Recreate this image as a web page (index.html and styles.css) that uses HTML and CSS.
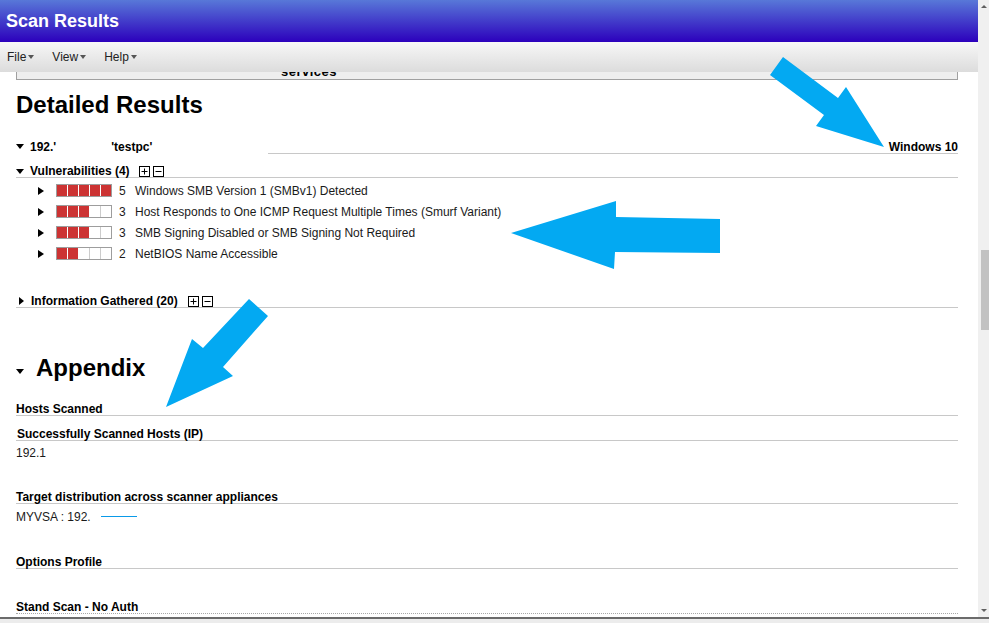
FILE: index.html
```html
<!DOCTYPE html>
<html>
<head>
<meta charset="utf-8">
<title>Scan Results</title>
<link rel="stylesheet" href="styles.css">
</head>
<body>

<div class="janela">
	<div class="principal">
		<div class="barraTitulo">Scan Results</div>

		<div class="menu">
			<span class="itemMenu">File</span>
			<span class="itemMenu">View</span>
			<span class="itemMenu">Help</span>
		</div>

		<div class="conteudo">
			<div class="caixaServicos">services</div>

			<h1 class="tituloGrande">Detailed Results</h1>

			<div class="linha host">
				<span class="setaBaixo"></span>
				<span>192.'</span>
				<span class="nomeHost">'testpc'</span>
				<span class="sistema">Windows 10</span>
			</div>

			<div class="linha vulnTopo">
				<span class="setaBaixo"></span>
				<span>Vulnerabilities (4)</span>
				<svg class="botaoMais" width="11" height="11" viewBox="0 0 11 11"><rect x="0.5" y="0.5" width="10" height="10" fill="#fff" stroke="#000"/><path d="M2.5 5.5h6M5.5 2.5v6" stroke="#000"/></svg>
				<svg class="botaoMenos" width="11" height="11" viewBox="0 0 11 11"><rect x="0.5" y="0.5" width="10" height="10" fill="#fff" stroke="#000"/><path d="M2.5 5.5h6" stroke="#000"/></svg>
			</div>

			<div class="listaVuln">
				<div class="vuln">
					<span class="setaDireita"></span>
					<span class="nivel"><i class="on"></i><i class="on"></i><i class="on"></i><i class="on"></i><i class="on"></i></span>
					<span class="numNivel">5</span>
					<span>Windows SMB Version 1 (SMBv1) Detected</span>
				</div>
				<div class="vuln">
					<span class="setaDireita"></span>
					<span class="nivel"><i class="on"></i><i class="on"></i><i class="on"></i><i></i><i></i></span>
					<span class="numNivel">3</span>
					<span>Host Responds to One ICMP Request Multiple Times (Smurf Variant)</span>
				</div>
				<div class="vuln">
					<span class="setaDireita"></span>
					<span class="nivel"><i class="on"></i><i class="on"></i><i class="on"></i><i></i><i></i></span>
					<span class="numNivel">3</span>
					<span>SMB Signing Disabled or SMB Signing Not Required</span>
				</div>
				<div class="vuln">
					<span class="setaDireita"></span>
					<span class="nivel"><i class="on"></i><i class="on"></i><i></i><i></i><i></i></span>
					<span class="numNivel">2</span>
					<span>NetBIOS Name Accessible</span>
				</div>
			</div>

			<div class="linha infoTopo">
				<span class="setaPequena"></span>
				<span>Information Gathered (20)</span>
				<svg class="botaoMais" width="11" height="11" viewBox="0 0 11 11"><rect x="0.5" y="0.5" width="10" height="10" fill="#fff" stroke="#000"/><path d="M2.5 5.5h6M5.5 2.5v6" stroke="#000"/></svg>
				<svg class="botaoMenos" width="11" height="11" viewBox="0 0 11 11"><rect x="0.5" y="0.5" width="10" height="10" fill="#fff" stroke="#000"/><path d="M2.5 5.5h6" stroke="#000"/></svg>
			</div>

			<h1 class="tituloGrande apendice"><span class="setaBaixo"></span>Appendix</h1>

			<div class="rotulo hostsScan">Hosts Scanned</div>
			<div class="rotulo sucesso">Successfully Scanned Hosts (IP)</div>
			<div class="texto ip">192.1</div>

			<div class="rotulo distrib">Target distribution across scanner appliances</div>
			<div class="texto appliance">MYVSA : 192.<span class="risco"></span></div>

			<div class="rotulo opcoes">Options Profile</div>
			<div class="rotulo perfil">Stand Scan - No Auth</div>
		</div>
	</div>

	<div class="rolagem">
		<span class="rolaCima"></span>
		<span class="rolaBarra"></span>
		<span class="rolaBaixo"></span>
	</div>
</div>

<div class="rodape"></div>

<svg class="setas" width="989" height="623" viewBox="0 0 989 623">
	<polygon points="783,57 838,98 846,87 884,147 816,126 824,115 770,75" fill="#03a9f2"/>
	<polygon points="511,233 616,201 616,217 720,219 720,253 615,252 614,269" fill="#03a9f2"/>
	<polygon points="249,299 268,316 223,367 233,376 166,407 192,339 203,348" fill="#03a9f2"/>
</svg>

</body>
</html>
```

FILE: styles.css
```css
body{
	margin: 0;
	width: 989px;
	height: 623px;
	overflow: hidden;
	position: relative;
	font-family: "Liberation Sans", Arial, sans-serif;
	font-size: 12px;
	color: #000;
	background: #ececec;
}

.janela{
	display: flex;
	height: 617px;
	background: #fff;
}

.principal{
	width: 978px;
	display: flex;
	flex-direction: column;
}

.barraTitulo{
	height: 42px;
	line-height: 42px;
	padding-left: 6px;
	font-size: 18px;
	font-weight: bold;
	color: #fff;
	background: linear-gradient(#5878d8, #2c00bc);
}

.menu{
	height: 30px;
	display: flex;
	align-items: center;
	gap: 18px;
	padding-left: 7px;
	color: #222;
	background: linear-gradient(#f7f7f7, #dcdcdc);
}

.itemMenu::after{
	content: "";
	display: inline-block;
	margin-left: 2px;
	vertical-align: 2px;
	border-left: 3.5px solid transparent;
	border-right: 3.5px solid transparent;
	border-top: 4px solid #555;
}

.conteudo{
	flex: 1;
	overflow: hidden;
	padding: 0 20px 0 16px;
}

.caixaServicos{
	margin-top: -8px;
	height: 15px;
	line-height: 16px;
	padding-left: 264px;
	font-size: 13px;
	font-weight: bold;
	letter-spacing: 0.5px;
	border: 1px solid #a0a0a0;
	border-top: 0;
	background: #eee;
}

.tituloGrande{
	margin: 11px 0 0;
	height: 28px;
	font-size: 24px;
	line-height: 28px;
}

.linha{
	position: relative;
	display: flex;
	height: 15px;
	line-height: 18px;
	font-weight: bold;
	border-bottom: 1px solid #c8c8c8;
}

.setaBaixo{
	width: 0;
	height: 0;
	margin: 6px 6px 0 0;
	border-left: 4.5px solid transparent;
	border-right: 4.5px solid transparent;
	border-top: 5px solid #000;
}

.setaDireita{
	width: 0;
	height: 0;
	margin-right: 12px;
	border-top: 4px solid transparent;
	border-bottom: 4px solid transparent;
	border-left: 6px solid #000;
}

.setaPequena{
	width: 0;
	height: 0;
	margin: 5px 7px 0 3px;
	border-top: 4px solid transparent;
	border-bottom: 4px solid transparent;
	border-left: 5px solid #000;
}

.host{
	margin-top: 19px;
}

/* redacao branca em cima da linha */
.host::after{
	content: "";
	position: absolute;
	left: 0;
	bottom: -1px;
	width: 252px;
	height: 1px;
	background: #fff;
}

.nomeHost{
	margin-left: 55px;
}

.sistema{
	margin-left: auto;
}

.vulnTopo{
	margin-top: 8px;
}

.vulnTopo .setaBaixo{
	margin-top: 7px;
}

.botaoMais{
	margin: 4px 0 0 9px;
}

.botaoMenos{
	margin: 4px 0 0 3px;
}

.infoTopo .botaoMais{
	margin-left: 10px;
}

.listaVuln{
	margin-top: 2px;
}

.vuln{
	display: flex;
	align-items: center;
	height: 21px;
	padding-left: 22px;
	color: #1a1a1a;
}

.nivel{
	display: flex;
	height: 11px;
	border: 1px solid #9d9d9d;
}

.nivel i{
	width: 10px;
	border-right: 1px solid #ccc;
	background: #fff;
}

.nivel i.on{
	background: #cc3333;
	border-right-color: #fff;
}

.nivel i:last-child{
	border-right: 0;
}

.numNivel{
	width: 16px;
	margin-left: 7px;
}

.infoTopo{
	margin-top: 28px;
}

.apendice{
	display: flex;
	margin-top: 46px;
}

.apendice .setaBaixo{
	margin: 15px 12px 0 0;
}

.rotulo{
	height: 15px;
	line-height: 18px;
	font-weight: bold;
	border-bottom: 1px solid #c8c8c8;
}

.texto{
	height: 15px;
	line-height: 17px;
	color: #1a1a1a;
}

.hostsScan{ margin-top: 18px; }
.sucesso{ margin-top: 9px; padding-left: 1px; }
.ip{ margin-top: 4px; }
.distrib{ margin-top: 28px; }
.appliance{ margin-top: 5px; }
.opcoes{ margin-top: 29px; }

.perfil{
	margin-top: 29px;
	border-bottom: 1px dotted #a8a8a8;
}

.risco{
	display: inline-block;
	width: 36px;
	height: 0;
	margin-left: 10px;
	vertical-align: 4px;
	border-top: 1px solid #0a9ae8;
}

.rolagem{
	width: 11px;
	display: flex;
	flex-direction: column;
	align-items: center;
	background: #f0f0f0;
}

.rolaCima{
	margin-top: 5px;
	border-left: 3px solid transparent;
	border-right: 3px solid transparent;
	border-bottom: 3px solid #606060;
}

.rolaBarra{
	align-self: flex-end;
	width: 8px;
	height: 80px;
	margin-top: 242px;
	background: #c2c2c2;
}

.rolaBaixo{
	margin: auto 0 5px;
	border-left: 3px solid transparent;
	border-right: 3px solid transparent;
	border-top: 3px solid #606060;
}

.rodape{
	height: 4px;
	border-top: 2px solid #6b6b6b;
	background: #ececec;
}

.setas{
	position: absolute;
	top: 0;
	left: 0;
	pointer-events: none;
}
```
